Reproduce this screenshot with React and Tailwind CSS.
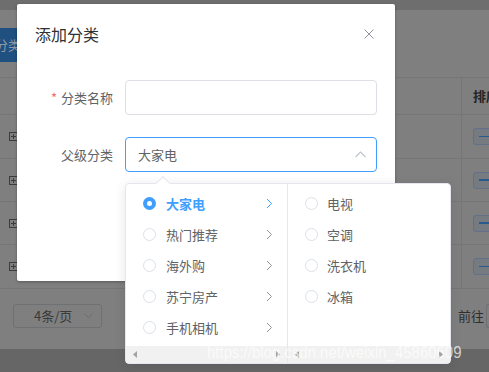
import React from "react";

const CJK = { fontFamily: '"Noto Sans CJK SC", "Noto Sans", sans-serif' };

function Radio({ active }) {
  if (active)
    return (
      <span className="w-[13px] h-[13px] rounded-full bg-[#409eff] flex items-center justify-center shrink-0">
        <span className="w-[5px] h-[5px] rounded-full bg-white" />
      </span>
    );
  return <span className="w-[13px] h-[13px] rounded-full border border-[#dcdfe6] bg-white shrink-0" />;
}

function Chevron({ active }) {
  return (
    <svg width="7" height="11" viewBox="0 0 7 11" className="shrink-0">
      <path d="M1 1 L5.5 5.5 L1 10" fill="none" stroke={active ? "#409eff" : "#909399"} strokeWidth="1" />
    </svg>
  );
}

function ScrollBar() {
  return (
    <div className="h-[17px] bg-[#f1f1f1] flex items-center justify-between px-[7px]">
      <svg width="5" height="7" viewBox="0 0 5 7"><path d="M4 0 L0 3.5 L4 7 Z" fill="#a3a3a3" /></svg>
      <svg width="5" height="7" viewBox="0 0 5 7"><path d="M1 0 L5 3.5 L1 7 Z" fill="#a3a3a3" /></svg>
    </div>
  );
}

function TableRow({ h }) {
  return (
    <div className={`flex border-b border-[#767676] overflow-hidden ${h}`}>
      <div className="w-[461px] shrink-0 flex items-center pl-[9px]">
        <span className="w-[9px] h-[9px] border border-[#3c3c3c] relative flex items-center justify-center">
          <span className="absolute w-[5px] h-px bg-[#3c3c3c]" />
          <span className="absolute h-[5px] w-px bg-[#3c3c3c]" />
        </span>
      </div>
      <div className="shrink-0 w-[40px] border-l border-[#767676] flex items-center pl-[11px]">
        <span className="shrink-0 w-[30px] h-[17px] rounded-[3px] bg-[#767b82] border border-[#62708a] flex items-center pl-[5px]">
          <span className="w-[12px] h-[1.5px] bg-[#285a8e]" />
        </span>
      </div>
    </div>
  );
}

export default function App() {
  const left = ["大家电", "热门推荐", "海外购", "苏宁房产", "手机相机"];
  const right = ["电视", "空调", "洗衣机", "冰箱"];
  return (
    <div className="w-[489px] h-[372px] relative overflow-hidden bg-[#7f7f7f] flex flex-col" style={CJK}>
      {/* background page */}
      <div className="h-[10px] bg-[#6e6e6e] shrink-0" />
      <div className="h-[67px] shrink-0 pt-[18px]">
        <div className="ml-[-48px] w-[110px] h-[34px] bg-[#20507f] text-[#8f9aa8] text-[13px] flex items-center pl-[17px] whitespace-nowrap">
          添加分类
        </div>
      </div>
      <div className="border-t border-[#767676]">
        <div className="flex border-b border-[#767676] h-[37px] overflow-hidden">
          <div className="w-[461px] shrink-0" />
          <div className="shrink-0 w-[40px] border-l border-[#767676] flex items-center pl-[11px] text-[13px] font-bold text-[#262626] whitespace-nowrap">
            排序
          </div>
        </div>
        <TableRow h="h-[44px]" />
        <TableRow h="h-[43px]" />
        <TableRow h="h-[43px]" />
        <TableRow h="h-[44px]" />
      </div>
      <div className="h-[60px] shrink-0 flex items-start pt-[15px] overflow-hidden">
        <div className="shrink-0 ml-[13px] w-[89px] h-[24px] border border-[#6f7073] rounded-[3px] flex items-center pl-[20px] pr-[8px] justify-between text-[13px] text-[#3a3a3a]">
          <span>4条/页</span>
          <svg width="9" height="6" viewBox="0 0 9 6"><path d="M0.5 0.5 L4.5 4.5 L8.5 0.5" fill="none" stroke="#6a6c70" strokeWidth="1" /></svg>
        </div>
        <div className="shrink-0 ml-[356px] flex items-center h-[24px] text-[13px] text-[#2e2e2e] whitespace-nowrap">
          <span>前往</span>
          <span className="ml-[2px] w-[20px] h-[24px] border border-[#6f7073] rounded-l-[3px] border-r-0" />
        </div>
      </div>
      <div className="flex-1 bg-[#666666]" />

      {/* dialog */}
      <div className="absolute left-[17px] top-[4px] w-[378px] h-[277px] bg-white shadow-[0_1px_3px_rgba(0,0,0,0.3)] rounded-[2px]">
        <div className="flex items-center justify-between pt-[20px] pl-[18px] pr-[21px] h-[40px]">
          <span className="text-[16px] leading-[20px] text-[#303133]">添加分类</span>
          <svg width="10" height="10" viewBox="0 0 10 10"><path d="M0.5 0.5 L9.5 9.5 M9.5 0.5 L0.5 9.5" stroke="#909399" strokeWidth="1" /></svg>
        </div>
        <div className="mt-[36px] flex items-center">
          <div className="w-[96px] text-right text-[13px] text-[#606266] pr-0">
            <span className="text-[#f56c6c] mr-[4px]">*</span>分类名称
          </div>
          <div className="ml-[12px] w-[252px] h-[35px] border border-[#dcdfe6] rounded-[4px]" />
        </div>
        <div className="mt-[22px] flex items-center">
          <div className="w-[96px] text-right text-[13px] text-[#606266]">父级分类</div>
          <div className="ml-[12px] w-[252px] h-[35px] border border-[#409eff] rounded-[4px] flex items-center justify-between pl-[12px] pr-[10px]">
            <span className="text-[13px] text-[#606266]">大家电</span>
            <svg width="11" height="7" viewBox="0 0 11 7"><path d="M0.5 6 L5.5 1 L10.5 6" fill="none" stroke="#c0c4cc" strokeWidth="1.2" /></svg>
          </div>
        </div>
      </div>

      {/* cascader dropdown */}
      <div className="absolute left-[125px] top-[183px] w-[326px] h-[181px] bg-white border border-[#e4e7ed] rounded-[4px] shadow-[0_2px_12px_rgba(0,0,0,0.1)] flex">
        <div className="absolute left-[32px] top-[-6px] w-[10px] h-[10px] bg-white border-l border-t border-[#e4e7ed] rotate-45" />
        <div className="w-[162px] border-r border-[#e4e7ed] flex flex-col justify-between">
          <div className="pt-[4px]">
            {left.map((t, i) => (
              <div key={t} className="h-[31px] flex items-center pl-[17px] pr-[14px]">
                <Radio active={i === 0} />
                <span className={`ml-[10px] flex-1 text-[13px] ${i === 0 ? "text-[#409eff] font-bold" : "text-[#606266]"}`}>{t}</span>
                <Chevron active={i === 0} />
              </div>
            ))}
          </div>
          <ScrollBar />
        </div>
        <div className="flex-1 flex flex-col justify-between">
          <div className="pt-[4px]">
            {right.map((t) => (
              <div key={t} className="h-[31px] flex items-center pl-[17px]">
                <Radio />
                <span className="ml-[9px] text-[13px] text-[#606266]">{t}</span>
              </div>
            ))}
          </div>
          <ScrollBar />
        </div>
      </div>

      {/* watermark */}
      <div
        className="absolute left-[207px] top-[342px] text-[17px] leading-[22px] text-white/70 whitespace-nowrap origin-left scale-x-[0.88]"
        style={{ fontFamily: '"Liberation Sans", Arial, sans-serif' }}
      >
        https://blog.csdn.net/weixin_45860609
      </div>
    </div>
  );
}
